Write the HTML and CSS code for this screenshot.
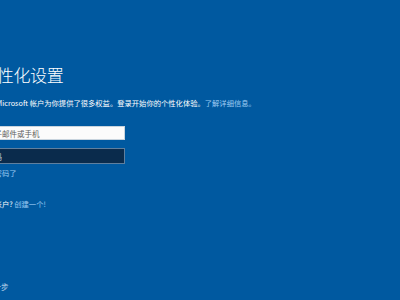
FILE: index.html
```html
<!DOCTYPE html>
<html lang="zh-CN">
<head>
<meta charset="utf-8">
<title>个性化设置</title>
<link rel="stylesheet" href="styles.css">
</head>
<body>
<div class="page">
  <main class="content">
    <h1 class="title">个性化设置</h1>
    <p class="intro">你的 Microsoft 帐户为你提供了很多权益。登录开始你的个性化体验。<a class="link">了解详细信息。</a></p>
    <div class="field field-email">电子邮件或手机</div>
    <div class="field field-password">密码</div>
    <a class="link forgot">忘记密码了</a>
    <p class="create">没有帐户? <a class="link">创建一个!</a></p>
  </main>
  <footer class="footer">上一步</footer>
</div>
</body>
</html>
```

FILE: styles.css
```css
html, body {
  margin: 0;
  padding: 0;
}
body {
  width: 400px;
  height: 300px;
  overflow: hidden;
  background: #0059a0;
  color: #ffffff;
  font-family: "Noto Sans CJK SC", "Noto Sans", sans-serif;
}
.page {
  height: 300px;
  display: flex;
  flex-direction: column;
}
.content {
  display: flex;
  flex-direction: column;
  align-items: flex-start;
  margin-left: -20px;
  padding-top: 65px;
}
.title {
  margin: 0;
  font-size: 17px;
  line-height: 20px;
  font-weight: 300;
  letter-spacing: -0.3px;
}
.intro {
  margin: 13px 0 0;
  font-size: 7.3px;
  line-height: 10px;
  white-space: nowrap;
}
.link {
  color: #9dcbf3;
}
.field {
  box-sizing: border-box;
  width: 145px;
  font-size: 7.5px;
  padding-left: 6px;
  display: flex;
  align-items: center;
}
.field-email {
  margin-top: 18px;
  height: 14px;
  background: #fbfbfb;
  border: 1px solid #c8d4de;
  color: #5d5d5d;
}
.field-password {
  margin-top: 8px;
  height: 16px;
  background: #0a2b4c;
  border: 1px solid #5f7f9e;
  color: #c9d3dc;
}
.forgot {
  margin-top: 4px;
  font-size: 7.3px;
  line-height: 10px;
}
.create {
  margin: 21px 0 0;
  font-size: 7.3px;
  line-height: 10px;
}
.footer {
  margin-top: auto;
  margin-left: -14px;
  padding-bottom: 8px;
  font-size: 7.5px;
  line-height: 10px;
  color: #c3d9ee;
}
```
